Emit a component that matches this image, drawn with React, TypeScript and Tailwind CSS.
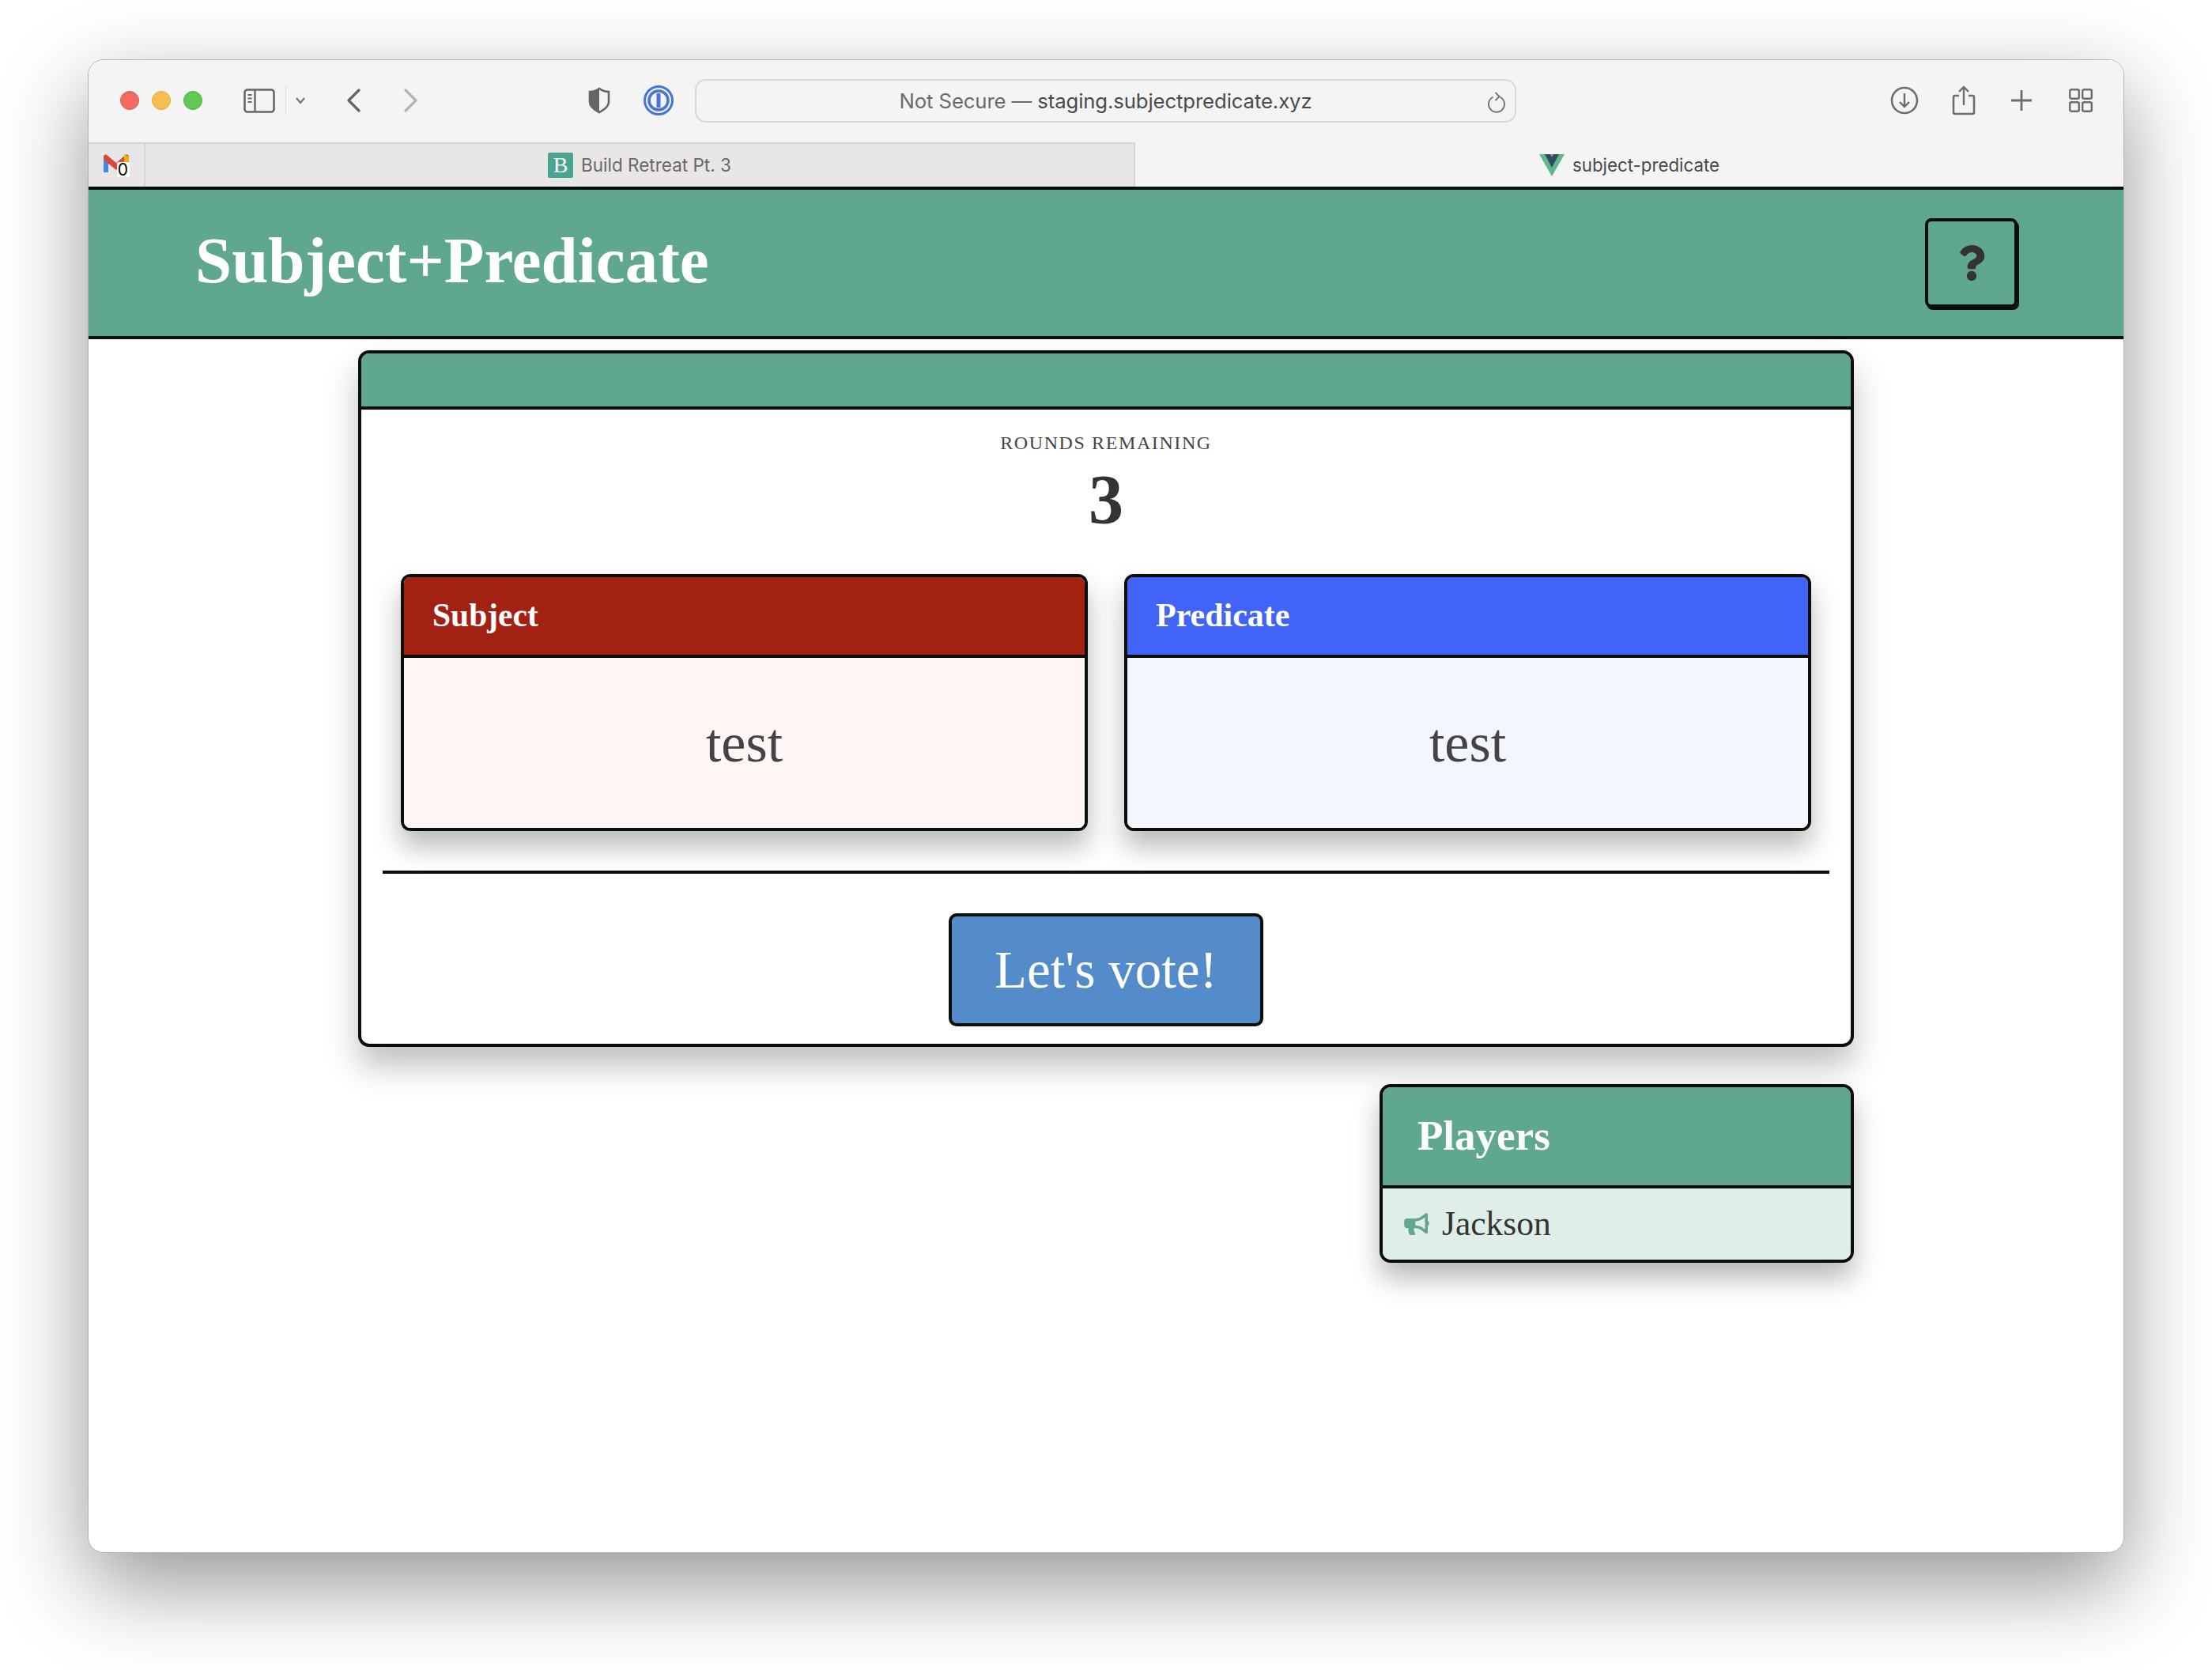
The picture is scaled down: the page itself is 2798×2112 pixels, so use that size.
import React from "react";
import { FaBullhorn, FaQuestion } from "react-icons/fa";

function SidebarIcon() {
  return (
    <svg width="40" height="31" viewBox="0 0 40 31" fill="none" className="ml-[52px]">
      <rect x="1.5" y="1.5" width="37" height="28" rx="3.5" stroke="#666" strokeWidth="2.6" />
      <path d="M14.5 2v27" stroke="#666" strokeWidth="2.4" />
      <path d="M5.5 8h5M5.5 12.5h5M5.5 17h5" stroke="#666" strokeWidth="2" />
    </svg>
  );
}

function Gmail() {
  return (
    <svg width="34" height="30" viewBox="0 0 34 30">
      <path d="M1 3v21h6V10z" fill="#4285f4" />
      <path d="M1 3l3-2 13 11 13-11 3 2v6L17 21 1 8z" fill="#d9483b" />
      <path d="M27 9l6-5v20h-6z" fill="#34a853" />
      <path d="M27 1l6 3v6l-6 4z" fill="#f4b400" />
      <rect x="18" y="11" width="16" height="19" rx="2" fill="#fff" />
    </svg>
  );
}

export default function App() {
  return (
    <div className="h-[2112px] w-[2798px] bg-white pl-[111px] pt-[75px] font-['Liberation_Serif',serif]">
      <div className="flex h-[1889px] w-[2576px] flex-col overflow-hidden rounded-[20px] border border-[#b4b4b4] bg-white shadow-[0_40px_110px_rgba(0,0,0,0.42)]">
        {/* toolbar */}
        <div className="flex h-[104px] shrink-0 items-center bg-[#f4f4f4] pb-[2px] font-['Inter',sans-serif]">
          <div className="ml-[40px] h-[24px] w-[24px] rounded-full border border-[#dc5b50] bg-[#f26b5f]" />
          <div className="ml-[16px] h-[24px] w-[24px] rounded-full border border-[#e0a93f] bg-[#f6be4f]" />
          <div className="ml-[16px] h-[24px] w-[24px] rounded-full border border-[#4eae44] bg-[#60c955]" />
          <SidebarIcon />
          <div className="ml-[13px] h-[36px] w-px bg-[#dddddd]" />
          <svg width="14" height="10" viewBox="0 0 14 10" fill="none" className="ml-[11px]">
            <path d="M2 2l5 6 5-6" stroke="#777" strokeWidth="2.2" />
          </svg>
          <svg width="20" height="30" viewBox="0 0 20 30" fill="none" className="ml-[50px]">
            <path d="M17 2L4 15l13 13" stroke="#666" strokeWidth="3.2" strokeLinecap="round" strokeLinejoin="round" />
          </svg>
          <svg width="20" height="30" viewBox="0 0 20 30" fill="none" className="ml-[53px]">
            <path d="M3 2l13 13L3 28" stroke="#b4b4b4" strokeWidth="3.2" strokeLinecap="round" strokeLinejoin="round" />
          </svg>
          <svg width="28" height="34" viewBox="0 0 28 34" fill="none" className="ml-[214px]">
            <path d="M14 2c4 3 8 4 12 4v13c0 6-6 10-12 13C8 29 2 25 2 19V6c4 0 8-1 12-4z" stroke="#666" strokeWidth="2.6" fill="#f4f4f4" />
            <path d="M14 2C10 5 6 6 2 6v13c0 6 6 10 12 13z" fill="#666" />
          </svg>
          <svg width="38" height="38" viewBox="0 0 38 38" fill="none" className="ml-[42px]">
            <circle cx="19" cy="19" r="17.5" stroke="#4574dc" strokeWidth="3" />
            <circle cx="19" cy="19" r="12" stroke="#4574dc" strokeWidth="3.6" />
            <rect x="16.5" y="10" width="5" height="18" rx="1" fill="#4574dc" />
          </svg>
          <div className="relative ml-[27px] flex h-[55px] w-[1039px] items-center justify-center rounded-[14px] border-2 border-[#d8d8d8] pt-[2px] text-[25.7px] tracking-[-0.1px]">
            <span className="text-[#6a6a6a]">Not Secure —&nbsp;</span>
            <span className="text-[#4a4a4a]">staging.subjectpredicate.xyz</span>
            <svg width="24" height="27" viewBox="0 0 24 27" fill="none" className="absolute right-[11px] top-[14px]">
              <path d="M7 7a10 10 0 1 0 10 0" stroke="#777" strokeWidth="2" strokeLinecap="round" />
              <path d="M10.5 1l5 5-5 5" stroke="#777" strokeWidth="2" />
            </svg>
          </div>
          <svg width="36" height="36" viewBox="0 0 36 36" fill="none" className="ml-[473px]">
            <circle cx="18" cy="18" r="16" stroke="#6d6d6d" strokeWidth="2.6" />
            <path d="M18 9v17M12 20l6 6 6-6" stroke="#6d6d6d" strokeWidth="2.4" />
          </svg>
          <svg width="30" height="38" viewBox="0 0 30 38" fill="none" className="ml-[42px]">
            <path d="M9 13H4a2 2 0 0 0-2 2v19a2 2 0 0 0 2 2h22a2 2 0 0 0 2-2V15a2 2 0 0 0-2-2h-5" stroke="#6d6d6d" strokeWidth="2.6" />
            <path d="M15 25V3M9 8l6-6 6 6" stroke="#6d6d6d" strokeWidth="2.4" />
          </svg>
          <svg width="28" height="28" viewBox="0 0 28 28" fill="none" className="ml-[44px]">
            <path d="M14 1v26M1 14h26" stroke="#6d6d6d" strokeWidth="2.8" />
          </svg>
          <svg width="30" height="30" viewBox="0 0 30 30" fill="none" className="ml-[46px]">
            <rect x="1.2" y="1.2" width="11.6" height="11.6" rx="2" stroke="#6d6d6d" strokeWidth="2.4" />
            <rect x="17.2" y="1.2" width="11.6" height="11.6" rx="2" stroke="#6d6d6d" strokeWidth="2.4" />
            <rect x="1.2" y="17.2" width="11.6" height="11.6" rx="2" stroke="#6d6d6d" strokeWidth="2.4" />
            <rect x="17.2" y="17.2" width="11.6" height="11.6" rx="2" stroke="#6d6d6d" strokeWidth="2.4" />
          </svg>
        </div>
        {/* tabs */}
        <div className="flex h-[56px] shrink-0 font-['Inter',sans-serif] text-[22px]">
          <div className="flex w-[72px] items-center justify-center border-r-2 border-t-2 border-[#d6d5d5] bg-[#e8e6e7]">
            <div className="relative">
              <Gmail />
              <span className="absolute right-[2px] top-[10px] text-[21px] leading-[21px] text-black">0</span>
            </div>
          </div>
          <div className="flex w-[1252px] items-center justify-center gap-[10px] border-r-2 border-t-2 border-[#d6d5d5] bg-[#e8e6e7] text-[22.5px] text-[#6a6869]">
            <div className="flex h-[32px] w-[32px] items-center justify-center rounded-[2px] bg-[#4aa58e] font-['Liberation_Serif',serif] text-[28px] text-white">B</div>
            <span>Build Retreat Pt. 3</span>
          </div>
          <div className="flex flex-1 items-center justify-center gap-[10px] bg-[#f5f4f5] pt-[2px] text-[22.3px] text-[#4a484a]">
            <svg width="32" height="28" viewBox="0 0 32 28">
              <path d="M0 0h32L16 28z" fill="#5fb88a" />
              <path d="M7 0h7l2 4 2-4h7L16 17z" fill="#35495e" />
            </svg>
            <span>subject-predicate</span>
          </div>
        </div>
        {/* app header */}
        <div className="flex h-[193px] shrink-0 items-center justify-between border-y-4 border-[#0b0f0b] bg-[#5fa88d] pl-[135px] pr-[134px]">
          <h1 className="mb-[7px] text-[83px] font-bold leading-none text-white">Subject+Predicate</h1>
          <button className="flex h-[113px] w-[117px] items-center justify-center rounded-[8px] border-4 border-[#0b0f0b] shadow-[2px_3px_0_#0b0f0b]">
            <FaQuestion className="h-[45px] w-[34px] text-[#333333]" />
          </button>
        </div>
        {/* content */}
        <div className="flex flex-col items-end pr-[341px] pt-[14px]">
          <div className="w-[1892px] overflow-hidden rounded-[14px] border-4 border-[#0b0f0b] bg-white shadow-[0_24px_40px_rgba(0,0,0,0.25)]">
            <div className="h-[71px] border-b-4 border-[#0b0f0b] bg-[#5fa88d]" />
            <div className="flex flex-col items-center px-[27px] pb-[22px]">
              <div className="mt-[28px] text-[24px] leading-[28px] tracking-[1.6px] text-[#444444]">ROUNDS REMAINING</div>
              <div className="mt-[14px] text-[88px] font-bold leading-[88px] text-[#333333]">3</div>
              <div className="mt-[50px] flex w-full justify-center gap-[46px]">
                <div className="h-[325px] w-[869px] overflow-hidden rounded-[12px] border-4 border-[#0b0f0b] shadow-[0_20px_34px_rgba(0,0,0,0.28)]">
                  <div className="flex h-[102px] items-center border-b-4 border-[#0b0f0b] bg-[#a32113] pb-[2px] pl-[36px] text-[41.5px] font-bold text-white">Subject</div>
                  <div className="flex h-[215px] items-center justify-center bg-[#fef5f5] text-[70px] text-[#444444]">test</div>
                </div>
                <div className="h-[325px] w-[869px] overflow-hidden rounded-[12px] border-4 border-[#0b0f0b] shadow-[0_20px_34px_rgba(0,0,0,0.28)]">
                  <div className="flex h-[102px] items-center border-b-4 border-[#0b0f0b] bg-[#4263f8] pb-[2px] pl-[36px] text-[42px] font-bold text-white">Predicate</div>
                  <div className="flex h-[215px] items-center justify-center bg-[#f3f6fe] text-[70px] text-[#444444]">test</div>
                </div>
              </div>
              <div className="mt-[50px] h-[4px] w-full bg-[#0b0f0b]" />
              <button className="mt-[50px] flex h-[143px] w-[398px] items-center justify-center rounded-[10px] border-4 border-[#0b0f0b] bg-[#548ccb] text-[67px] text-white">Let's vote!</button>
            </div>
          </div>
          <div className="mt-[47px] w-[600px] overflow-hidden rounded-[14px] border-4 border-[#0b0f0b] shadow-[0_20px_34px_rgba(0,0,0,0.28)]">
            <div className="flex h-[128px] items-center border-b-4 border-[#0b0f0b] bg-[#5fa88d] pl-[44px] text-[53px] font-bold text-white">Players</div>
            <div className="flex h-[90px] items-center bg-[#dfeee8] pl-[27px] text-[43.5px] text-[#333333]">
              <FaBullhorn className="h-[28px] w-[32px] text-[#5fa88d]" />
              <span className="ml-[16px]">Jackson</span>
            </div>
          </div>
        </div>
      </div>
    </div>
  );
}
